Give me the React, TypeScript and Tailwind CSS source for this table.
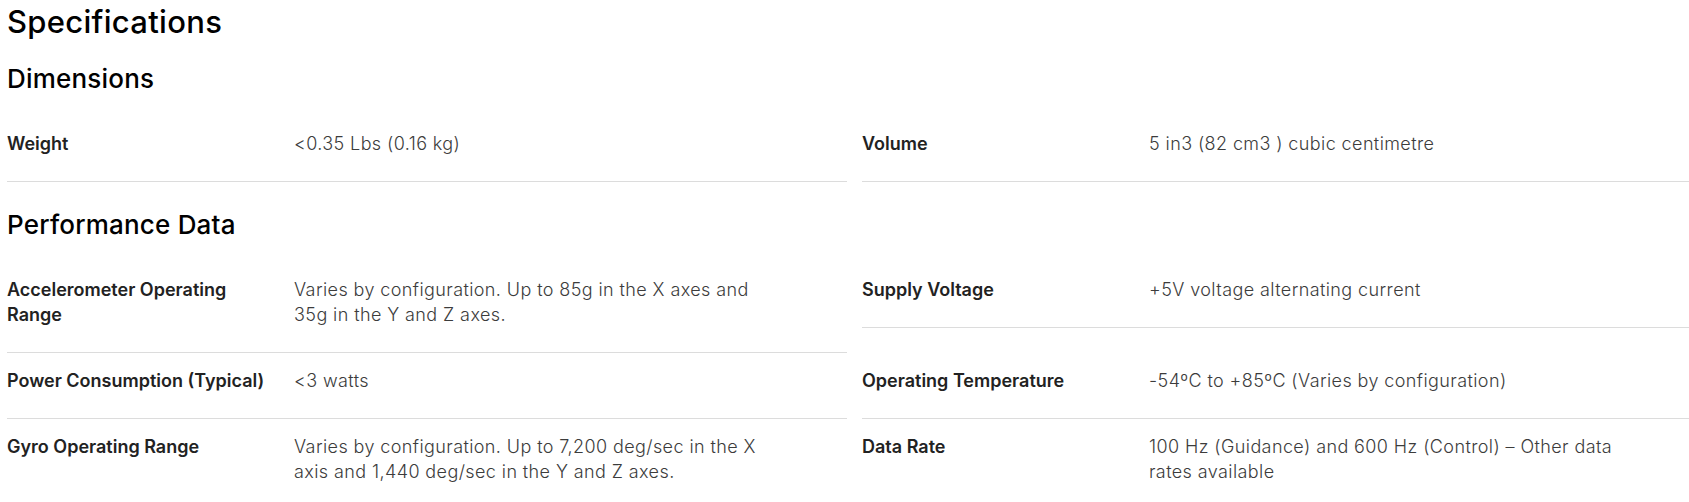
import React from "react";

type Spec = [string, string];
type Pair = [Spec | null, Spec | null];

const dimensions: Pair[] = [
  [
    ["Weight", "<0.35 Lbs (0.16 kg)"],
    ["Volume", "5 in3 (82 cm3 ) cubic centimetre"],
  ],
];

const performance: Pair[] = [
  [
    [
      "Accelerometer Operating Range",
      "Varies by configuration. Up to 85g in the X axes and 35g in the Y and Z axes.",
    ],
    ["Supply Voltage", "+5V voltage alternating current"],
  ],
  [
    ["Power Consumption (Typical)", "<3 watts"],
    ["Operating Temperature", "-54ºC to +85ºC (Varies by configuration)"],
  ],
  [
    [
      "Gyro Operating Range",
      "Varies by configuration. Up to 7,200 deg/sec in the X axis and 1,440 deg/sec in the Y and Z axes.",
    ],
    [
      "Data Rate",
      "100 Hz (Guidance) and 600 Hz (Control) – Other data rates available",
    ],
  ],
];

function Cell({ spec }: { spec: Spec | null }) {
  if (!spec) return <div />;
  const [label, value] = spec;
  return (
    <div className="flex border-b border-[#dcdcdc] pt-[15px] pb-[25px] text-[18px] leading-[25px]">
      <div className="w-[287px] shrink-0 pr-4 font-semibold text-[#222222]">
        {label}
      </div>
      <div className="w-[478px] font-light tracking-[0.4px] text-[#3c3c3c]">
        {value}
      </div>
    </div>
  );
}

function SpecGrid({ rows }: { rows: Pair[] }) {
  return (
    <div className="grid grid-cols-[840px_840px] items-start gap-x-[15px]">
      {rows.map(([l, r], i) => (
        <React.Fragment key={i}>
          <Cell spec={l} />
          <Cell spec={r} />
        </React.Fragment>
      ))}
    </div>
  );
}

export default function App() {
  return (
    <div
      className="h-[502px] w-[1689px] overflow-hidden bg-white pl-[7px] pt-[4px]"
      style={{ fontFamily: "Inter, 'Noto Sans', sans-serif" }}
    >
      <h1 className="text-[31px] leading-[36px] font-medium tracking-[0.3px] text-black">
        Specifications
      </h1>
      <h2 className="mt-[24px] mb-[22px] text-[26px] leading-[30px] font-medium tracking-[0.2px] text-black">
        Dimensions
      </h2>
      <SpecGrid rows={dimensions} />
      <h2 className="mt-[28px] mb-[22px] text-[26px] leading-[30px] font-medium tracking-[0.2px] text-black">
        Performance Data
      </h2>
      <SpecGrid rows={performance} />
    </div>
  );
}
